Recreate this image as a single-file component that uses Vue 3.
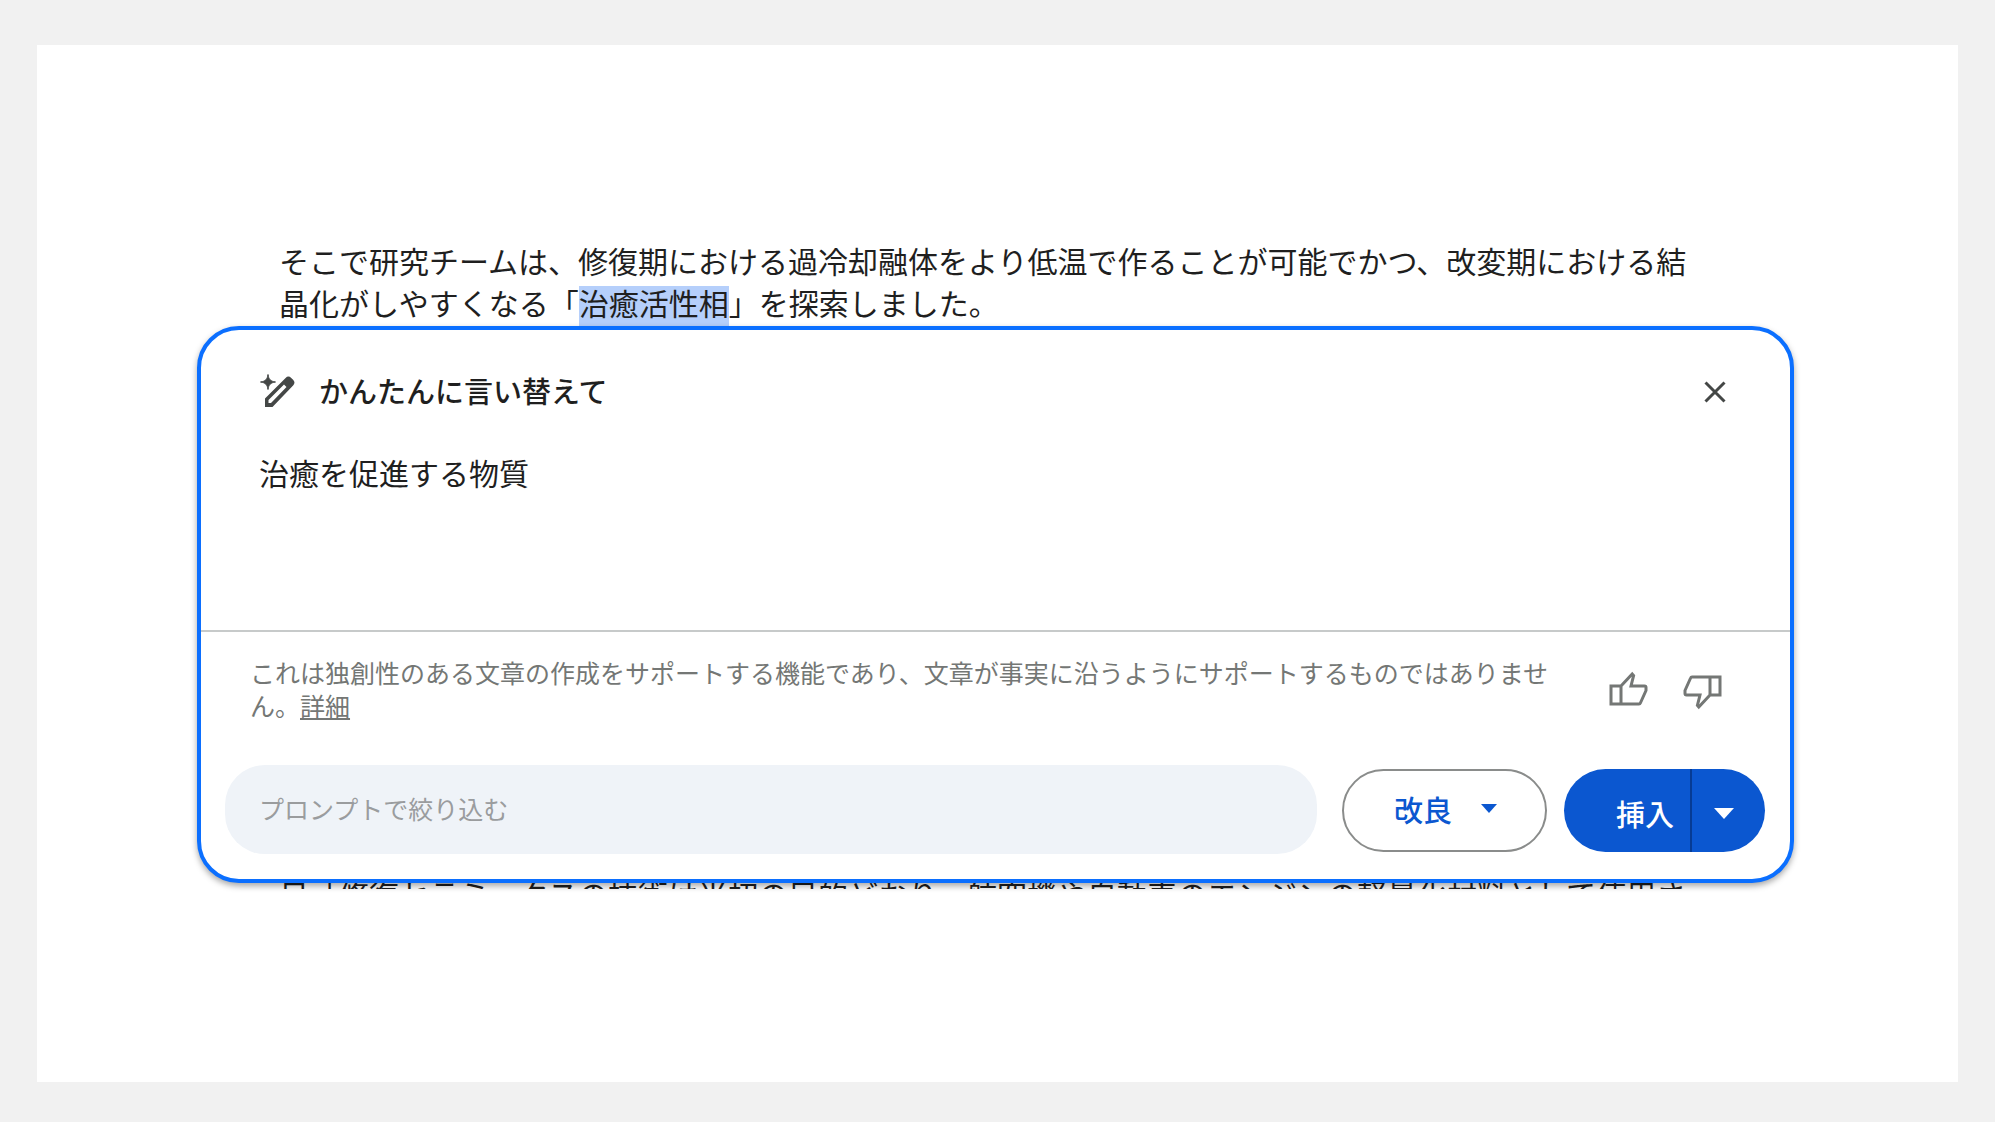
<template>
  <div class="app">
    <main class="page">
      <p class="doc-text">
        そこで研究チームは、修復期における過冷却融体をより低温で作ることが可能でかつ、改変期における結晶化がしやすくなる「<mark class="selection">治癒活性相</mark>」を探索しました。
      </p>

      <section v-if="open" class="dialog" role="dialog" aria-labelledby="dialog-title">
        <header class="dialog-header">
          <svg class="pen-icon" viewBox="0 0 38 38" aria-hidden="true">
            <path d="M9 1.5C9.8 6.6 11.4 8.2 16.5 9C11.4 9.8 9.8 11.4 9 16.5C8.2 11.4 6.6 9.8 1.5 9C6.6 8.2 8.2 6.6 9 1.5Z" stroke="#444746" />
            <path
              fill-rule="evenodd"
              d="M6 34V25.5L26.6 4.9a4 4 0 0 1 5.6 0l1.9 1.9a4 4 0 0 1 0 5.6L13.5 34ZM9.5 30H12L27.5 14L25 11.5L9.5 27Z"
            />
          </svg>
          <h2 id="dialog-title" class="dialog-title">かんたんに言い替えて</h2>
          <button class="icon-button" aria-label="閉じる" @click="open = false">
            <svg viewBox="0 0 40 40" aria-hidden="true">
              <path d="M10.5 10.5L29.5 29.5M29.5 10.5L10.5 29.5" fill="none" stroke="#444746" stroke-width="3" />
            </svg>
          </button>
        </header>

        <p class="result">治癒を促進する物質</p>

        <footer class="dialog-footer">
          <div class="notice-row">
            <p class="notice">
              これは独創性のある文章の作成をサポートする機能であり、文章が事実に沿うようにサポートするものではありません。<a href="#" class="notice-link">詳細</a>
            </p>
            <button
              v-for="vote in votes"
              :key="vote.name"
              class="icon-button"
              :class="vote.name"
              :aria-label="vote.label"
            >
              <svg viewBox="0 0 40 40" aria-hidden="true">
                <path
                  d="M3 16H13V34H3ZM13 16L24.2 4L25.6 5.6L23 16H36.5Q38 16 38 17.5V20.5L32.4 33Q32 34 31 34H13"
                  fill="none"
                  stroke="#747775"
                  stroke-width="3"
                />
              </svg>
            </button>
          </div>

          <div class="actions">
            <input v-model="prompt" class="prompt" type="text" placeholder="プロンプトで絞り込む" aria-label="プロンプトで絞り込む" />
            <button class="refine" aria-haspopup="menu">
              改良
              <svg class="caret" viewBox="0 0 16 9" aria-hidden="true"><path d="M0 0H16L8 9Z" /></svg>
            </button>
            <div class="insert-group">
              <button class="insert">挿入</button>
              <button class="insert-more" aria-label="挿入オプション" aria-haspopup="menu">
                <svg class="caret-large" viewBox="0 0 20 11" aria-hidden="true"><path d="M0 0H20L10 11Z" /></svg>
              </button>
            </div>
          </div>
        </footer>
      </section>

      <p class="covered-text">日「修復セラミックスの技術は当初の目的どおり、航空機や自動車のエンジンの軽量化材料として使用さ</p>
    </main>
  </div>
</template>

<script setup>
import { ref } from 'vue';

const open = ref(true);
const prompt = ref('');

const votes = [
  { name: 'vote-up', label: '良い提案' },
  { name: 'vote-down', label: '悪い提案' },
];
</script>

<style>
body {
  margin: 0;
  background: #f1f1f1;
}
</style>

<style scoped>
.app {
  box-sizing: border-box;
  display: flex;
  min-height: 100vh;
  padding: 45px 37px 40px;
  background: #f1f1f1;
  color: #1f1f1f;
  font-family: 'Noto Sans CJK JP', sans-serif;
}

.app * {
  box-sizing: border-box;
}

.page {
  flex: 1;
  min-width: 0;
  padding: 194px 164px 40px 160px;
  background: #fff;
}

p,
h2 {
  margin: 0;
}

button,
input {
  border: none;
  background: none;
  font-family: inherit;
}

button {
  padding: 0;
  cursor: pointer;
}

.doc-text {
  padding: 0 78px 0 82px;
  font-size: 30px;
  line-height: 42px;
}

/* runs down to the edge of the dialog */
.selection {
  display: inline-block;
  padding-bottom: 8px;
  background: #b5cffb;
  color: inherit;
  line-height: 32px;
}

.dialog {
  position: relative;
  border: 4px solid #0b6fff;
  border-radius: 42px;
  background: #fff;
  box-shadow: 0 3px 6px rgba(0, 0, 0, 0.35);
}

.dialog-header {
  display: flex;
  align-items: center;
  padding: 42px 55px 0 58px;
}

.pen-icon {
  width: 38px;
  height: 38px;
  fill: #444746;
}

.dialog-title {
  flex: 1;
  padding: 0 0 4px 22px;
  font-size: 29px;
  font-weight: 500;
  line-height: 36px;
}

.icon-button {
  flex: none;
  width: 40px;
  height: 40px;
}

.icon-button svg {
  display: block;
}

.result {
  min-height: 218px;
  padding: 39px 58px 0;
  font-size: 30px;
  line-height: 42px;
}

.dialog-footer {
  padding: 24px 25px 25px 24px;
  border-top: 2px solid #c7caca;
}

.notice-row {
  display: flex;
  align-items: flex-start;
  padding: 0 42px 0 25px;
}

.notice {
  flex: 1;
  padding-right: 46px;
  color: #747775;
  font-size: 25px;
  line-height: 33px;
}

.notice-link {
  color: inherit;
}

.vote-up {
  margin-top: 14px;
}

.vote-down {
  margin: 15px 0 0 35px;
}

.vote-down svg {
  transform: rotate(180deg);
}

.actions {
  display: flex;
  align-items: center;
  margin-top: 43px;
}

.prompt {
  flex: 1;
  min-width: 0;
  height: 89px;
  padding: 0 34px 4px;
  border-radius: 40px;
  background: #eff3f8;
  color: #1f1f1f;
  font-size: 25px;
}

.prompt::placeholder {
  color: #9a9c9e;
  opacity: 1;
}

.refine,
.insert-group {
  height: 83px;
  margin-top: 2px;
  border-radius: 42px;
}

.refine {
  display: flex;
  align-items: center;
  justify-content: center;
  gap: 29px;
  width: 205px;
  margin-left: 25px;
  padding: 0 0 4px 2px;
  border: 2px solid #8a8c8b;
  color: #0b57d0;
  font-size: 29px;
  font-weight: 500;
}

.caret {
  width: 16px;
  height: 9px;
  fill: #0b57d0;
}

.insert-group {
  display: flex;
  margin-left: 17px;
  overflow: hidden;
  background: #0b57d0;
}

.insert {
  width: 126px;
  padding: 4px 0 0 36px;
  color: #fff;
  font-size: 29px;
  font-weight: 500;
}

.insert-more {
  width: 75px;
  padding: 6px 10px 0 0;
  border-left: 2px solid #063b94;
}

.caret-large {
  width: 20px;
  height: 11px;
  fill: #fff;
}

/* the next line starts under the dialog, only a sliver of it shows */
.covered-text {
  height: 17px;
  margin-top: -11px;
  padding-left: 82px;
  overflow: hidden;
  font-size: 30px;
  line-height: 42px;
  white-space: nowrap;
}
</style>
